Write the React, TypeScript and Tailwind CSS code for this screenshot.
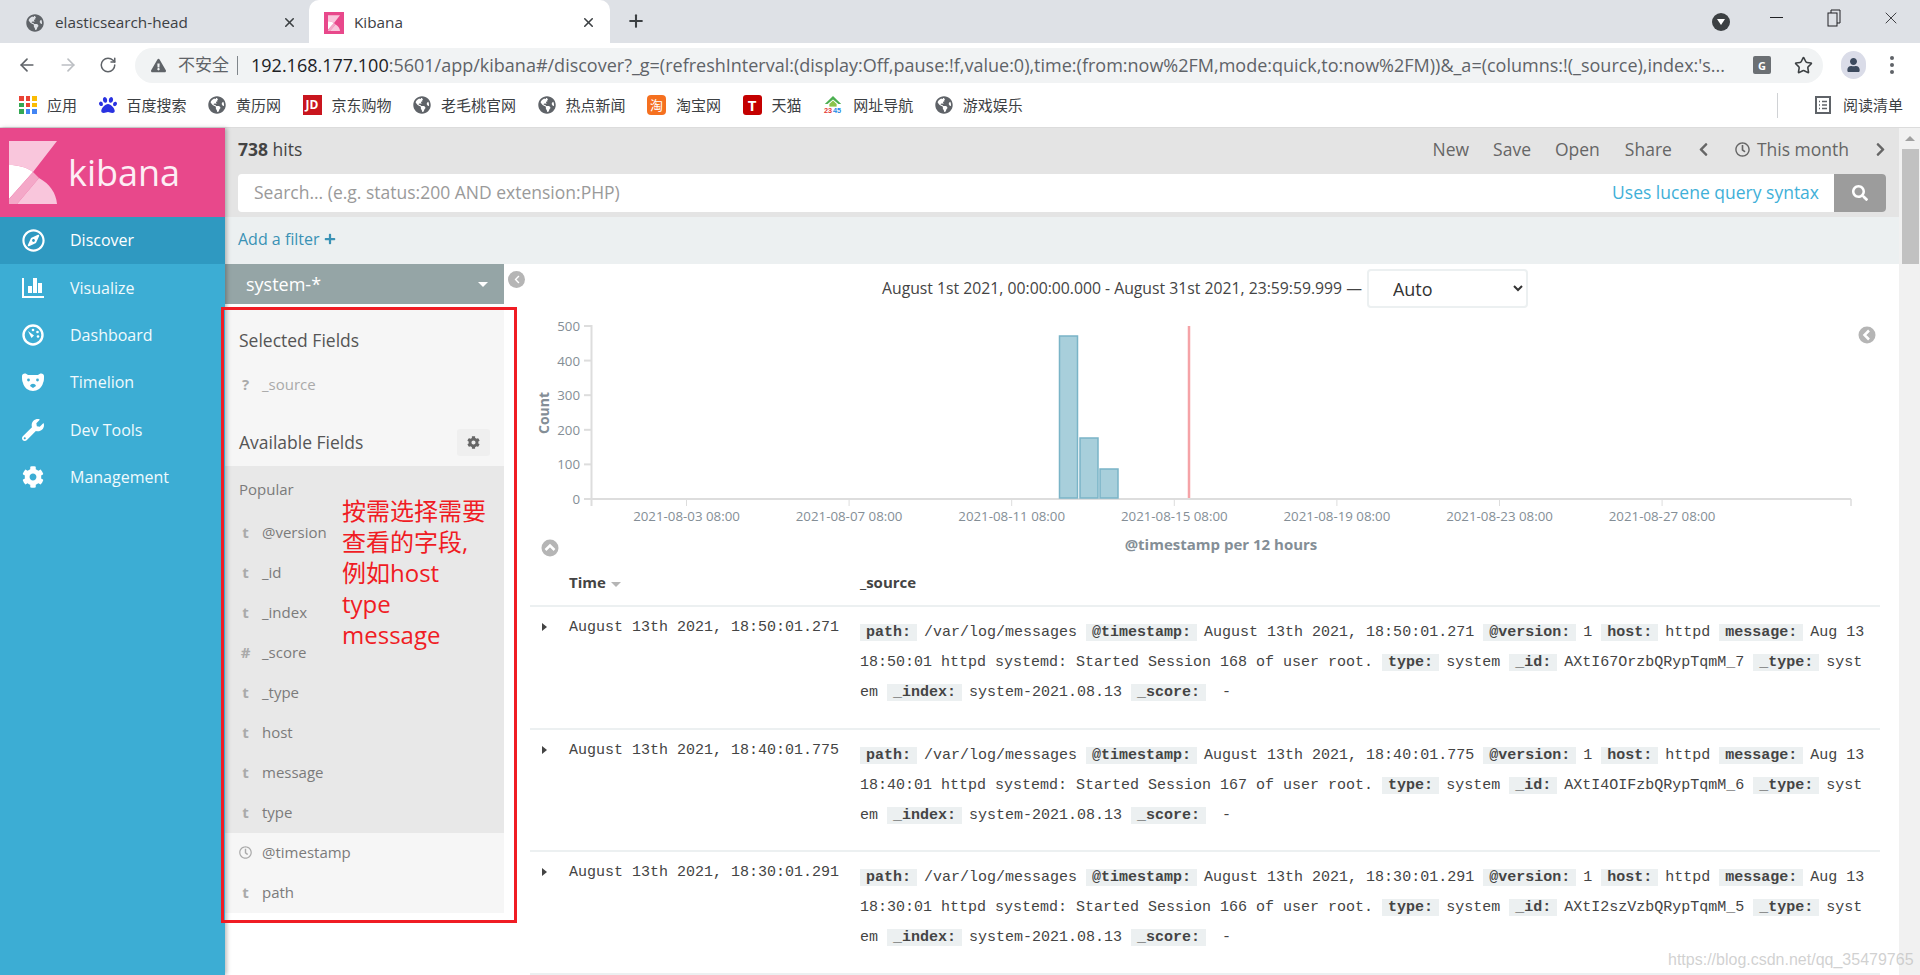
import { ArrowLeft, ArrowRight, RotateCw, Star, Plus, X } from "lucide-react";
import {
  FaGlobeAmericas,
  FaRegCompass,
  FaWrench,
  FaCog,
  FaSearch,
  FaChevronLeft,
  FaChevronRight,
  FaRegClock,
  FaUser,
  FaPlus,
  FaPaw,
  FaExclamationTriangle,
} from "react-icons/fa";

const sans = "font-['Open_Sans','Noto_Sans_CJK_SC',sans-serif]";

function Globe() {
  return <FaGlobeAmericas className="w-[18px] h-[18px] text-[#5f6368] shrink-0" />;
}

function KibanaMark({ className }: { className: string }) {
  return (
    <svg viewBox="0 0 48 63" className={className}>
      <path d="M0 0H48L24 31C17 26 9 24 0 24Z" fill="#f9c6dc" />
      <path d="M0 24C9 24 17 26 24 31L0 58Z" fill="#fff" />
      <path d="M24 31L30 37L8 63H0V58Z" fill="#f4a8c8" />
      <path d="M30 37C41 43 47 52 48 63H8Z" fill="#f9c6dc" />
    </svg>
  );
}

function Tabs() {
  return (
    <div className="h-[43px] bg-[#dee1e6] flex items-end shrink-0">
      <div className="w-[309px] h-[43px] flex items-center pl-[26px] pr-[12px] pt-[2px]">
        <Globe />
        <span className="ml-[11px] text-[15.3px] text-[#3c4043] flex-1">elasticsearch-head</span>
        <X strokeWidth={2.5} className="w-[15px] h-[15px] text-[#3c4043]" />
      </div>
      <div className="w-[301px] h-[43px] bg-white rounded-t-[10px] flex items-center pl-[15px] pr-[14px] pt-[2px]">
        <div className="w-[20px] h-[22px] bg-[#e8488b] flex items-center justify-center">
          <KibanaMark className="w-[12px] h-[16px]" />
        </div>
        <span className="ml-[10px] text-[15.3px] text-[#3c4043] flex-1">Kibana</span>
        <X strokeWidth={2.5} className="w-[15px] h-[15px] text-[#3c4043]" />
      </div>
      <Plus strokeWidth={2.5} className="w-[20px] h-[20px] ml-[16px] mb-[12px] text-[#3c4043]" />
      <div className="flex-1" />
      <div className="h-[43px] flex items-center">
        <div className="w-[18px] h-[18px] rounded-full bg-[#3c4043] flex items-center justify-center mt-[1px]">
          <div className="w-0 h-0 border-l-[4px] border-r-[4px] border-t-[6px] border-l-transparent border-r-transparent border-t-white" />
        </div>
        <div className="w-[13px] h-[1px] bg-[#202124] ml-[40px] mb-[8px]" />
        <svg viewBox="0 0 14 18" className="w-[14px] h-[18px] ml-[44px] mb-[8px] fill-none stroke-[#202124]">
          <rect x="1" y="4" width="9" height="13" />
          <path d="M4 4V1H13V14H10" />
        </svg>
        <X strokeWidth={1} className="w-[20px] h-[20px] ml-[40px] mr-[19px] mb-[8px] text-[#202124]" />
      </div>
    </div>
  );
}

function Toolbar() {
  return (
    <div className="h-[40px] bg-white flex items-center shrink-0 text-[#5f6368] pt-[4px]">
      <ArrowLeft className="w-[20px] h-[20px] ml-[17px]" />
      <ArrowRight className="w-[20px] h-[20px] ml-[21px] text-[#bcbfc3]" />
      <RotateCw className="w-[18px] h-[18px] ml-[21px]" />
      <div className="ml-[18px] w-[1688px] h-[35px] rounded-full bg-[#f1f3f4] flex items-center pl-[16px]">
        <FaExclamationTriangle className="w-[15px] h-[15px] text-[#5f6368] shrink-0" />
        <span className="ml-[12px] text-[17px] text-[#5f6368] shrink-0">不安全</span>
        <div className="w-[1px] h-[19px] bg-[#80868b] ml-[8px] shrink-0" />
        <div className="ml-[13px] text-[18px] whitespace-nowrap text-[#5f6368] w-[1486px] shrink-0 overflow-hidden">
          <span className="text-[#202124]">192.168.177.100</span>
          :5601/app/kibana#/discover?_g=(refreshInterval:(display:Off,pause:!f,value:0),time:(from:now%2FM,mode:quick,to:now%2FM))&_a=(columns:!(_source),index:'s...
        </div>
        <div className="w-[18px] h-[18px] ml-[16px] rounded-[2px] bg-[#6b6f73] flex items-center justify-center text-[11px] font-bold text-white leading-none shrink-0">
          G
        </div>
        <Star className="w-[19px] h-[19px] ml-[23px] text-[#3c4043] shrink-0" />
      </div>
      <div className="ml-[18px] w-[25px] h-[28px] rounded-full bg-[#dadce8] flex items-center justify-center">
        <FaUser className="w-[13px] h-[14px] text-[#3c4a5e]" />
      </div>
      <div className="ml-[24px] flex flex-col gap-[3px]">
        <div className="w-[4px] h-[4px] rounded-full bg-[#5f6368]" />
        <div className="w-[4px] h-[4px] rounded-full bg-[#5f6368]" />
        <div className="w-[4px] h-[4px] rounded-full bg-[#5f6368]" />
      </div>
    </div>
  );
}

function AppsIcon() {
  const colors = ["#ea4335", "#ea4335", "#fbbc04", "#34a853", "#ea4335", "#fbbc04", "#34a853", "#4285f4", "#4285f4"];
  return (
    <div className="w-[18px] h-[18px] grid grid-cols-3 gap-[2px]">
      {colors.map((c, i) => (
        <div key={i} style={{ backgroundColor: c }} />
      ))}
    </div>
  );
}

function House2345() {
  return (
    <svg viewBox="0 0 20 22" className="w-[20px] h-[20px] shrink-0">
      <path d="M10 1L19 10H16L10 5L4 10H1Z" fill="#4caf50" />
      <path d="M6 10L10 6L14 10V13H6Z" fill="#8bc34a" />
      <rect y="13" width="20" height="8" fill="#fff" />
      <text x="0" y="20" fontSize="8" fontWeight="700" fill="#e53935" fontFamily="Liberation Sans">23</text>
      <text x="10" y="20" fontSize="8" fontWeight="700" fill="#1e88e5" fontFamily="Liberation Sans">45</text>
    </svg>
  );
}

function Bookmark({ icon, label }: { icon: React.ReactNode; label: string }) {
  return (
    <div className="flex items-center gap-[10px] text-[15px] text-[#3c4043]">
      {icon}
      <span>{label}</span>
    </div>
  );
}

function Bookmarks() {
  return (
    <div className="h-[45px] bg-white flex items-center shrink-0 pl-[19px] pr-[17px] gap-[21.5px] border-b border-[#dcdcdc]">
      <Bookmark icon={<AppsIcon />} label="应用" />
      <Bookmark icon={<FaPaw className="w-[18px] h-[18px] text-[#2932e1]" />} label="百度搜索" />
      <Bookmark icon={<Globe />} label="黄历网" />
      <Bookmark
        icon={
          <div className="w-[19px] h-[20px] bg-[#c9151e] flex items-center justify-center text-[12px] font-bold text-white">
            JD
          </div>
        }
        label="京东购物"
      />
      <Bookmark icon={<Globe />} label="老毛桃官网" />
      <Bookmark icon={<Globe />} label="热点新闻" />
      <Bookmark
        icon={
          <div className="w-[19px] h-[20px] rounded-[4px] bg-[#f5701f] flex items-center justify-center text-[13px] leading-none text-white">
            淘
          </div>
        }
        label="淘宝网"
      />
      <Bookmark
        icon={
          <div className="w-[19px] h-[20px] rounded-[3px] bg-[#c40000] flex items-center justify-center text-[15px] font-bold text-white">
            T
          </div>
        }
        label="天猫"
      />
      <Bookmark icon={<House2345 />} label="网址导航" />
      <Bookmark icon={<Globe />} label="游戏娱乐" />
      <div className="flex-1" />
      <div className="w-[1px] h-[25px] bg-[#d0d2d5]" />
      <div className="flex items-center gap-[11px] text-[15px] text-[#3c4043] ml-[14px]">
        <svg viewBox="0 0 18 18" className="w-[18px] h-[18px] fill-none stroke-[#5f6368] stroke-2">
          <rect x="2" y="1" width="14" height="16" />
          <path d="M5 5.5h1M8 5.5h5M5 9h1M8 9h5M5 12.5h1M8 12.5h5" strokeWidth="1.4" />
        </svg>
        <span>阅读清单</span>
      </div>
    </div>
  );
}

function VisualizeIcon() {
  return (
    <svg viewBox="0 0 22 20" className="w-[22px] h-[20px] fill-white">
      <path d="M0 0H2V18H22V20H0Z" />
      <rect x="6" y="8" width="4" height="7" />
      <rect x="11" y="0" width="4" height="15" />
      <rect x="16" y="5" width="4" height="10" />
    </svg>
  );
}

function DashboardIcon() {
  return (
    <svg viewBox="0 0 22 22" className="w-[22px] h-[22px]">
      <circle cx="11" cy="11" r="9.5" fill="none" stroke="#fff" strokeWidth="2.4" />
      <path d="M6 7L12 11.5L9.5 14Z" fill="#fff" />
      <circle cx="11" cy="6" r="1.3" fill="#fff" />
      <circle cx="15.5" cy="8" r="1.3" fill="#fff" />
      <circle cx="16" cy="12.5" r="1.3" fill="#fff" />
    </svg>
  );
}

function BearIcon() {
  return (
    <svg viewBox="0 0 22 19" className="w-[22px] h-[19px]">
      <path d="M0 3C0 0 4 -0.5 6 2H16C18 -0.5 22 0 22 3C22 6 22 8 21 10C20 15 15 18 11 18C7 18 2 15 1 10C0 8 0 6 0 3Z" fill="#fff" />
      <circle cx="6.5" cy="7" r="1.4" fill="#3cadd4" />
      <circle cx="15.5" cy="7" r="1.4" fill="#3cadd4" />
      <path d="M8 13C9 10 13 10 14 13L11 15Z" fill="#3cadd4" />
    </svg>
  );
}

const navItems: { label: string; icon: React.ReactNode }[] = [
  { label: "Discover", icon: <FaRegCompass className="w-[23px] h-[23px] text-white" /> },
  { label: "Visualize", icon: <VisualizeIcon /> },
  { label: "Dashboard", icon: <DashboardIcon /> },
  { label: "Timelion", icon: <BearIcon /> },
  { label: "Dev Tools", icon: <FaWrench className="w-[22px] h-[22px] text-white" /> },
  { label: "Management", icon: <FaCog className="w-[22px] h-[22px] text-white" /> },
];

function Sidebar() {
  return (
    <div className="w-[225px] shrink-0 bg-[#3cadd4] flex flex-col shadow-[2px_0_4px_rgba(0,0,0,0.25)] z-10">
      <div className="h-[89px] bg-[#e8488b] flex items-center pl-[9px]">
        <KibanaMark className="w-[48px] h-[63px]" />
        <span className="ml-[11px] text-[36px] font-medium text-[#fdeef5] leading-none">kibana</span>
      </div>
      {navItems.map((item, i) => (
        <div
          key={item.label}
          className={
            i === 0
              ? "h-[47.4px] pb-[1px] flex items-center bg-[#2f99c1] text-white"
              : "h-[47.4px] pb-[1px] flex items-center text-[#f0fafd]"
          }
        >
          <div className="w-[70px] flex justify-center pr-[4px]">{item.icon}</div>
          <span className="text-[16px]">{item.label}</span>
        </div>
      ))}
    </div>
  );
}

function TopBar() {
  return (
    <div className="shrink-0">
      <div className="bg-[#e4e4e4] h-[89px] pl-[13px] pr-[13px] flex flex-col">
        <div className="h-[46px] pb-[4px] flex items-center text-[17.5px] text-[#666]">
          <span className="text-[#444]">
            <b>738</b> hits
          </span>
          <div className="flex-1" />
          <span>New</span>
          <span className="ml-[24px]">Save</span>
          <span className="ml-[24px]">Open</span>
          <span className="ml-[25px]">Share</span>
          <FaChevronLeft className="ml-[26px] w-[11px] h-[15px]" />
          <FaRegClock className="ml-[26px] w-[15px] h-[15px]" />
          <span className="ml-[7px]">This month</span>
          <FaChevronRight className="ml-[26px] w-[11px] h-[15px]" />
        </div>
        <div className="h-[38px] flex rounded-[4px] overflow-hidden bg-white">
          <div className="flex-1 pl-[16px] pr-[15px] pb-[2px] flex items-center justify-between text-[17.5px]">
            <span className="text-[#9a9a9a]">Search... (e.g. status:200 AND extension:PHP)</span>
            <span className="text-[#3fb0d8]">Uses lucene query syntax</span>
          </div>
          <div className="w-[52px] bg-[#9c9c9c] flex items-center justify-center">
            <FaSearch className="w-[16px] h-[16px] text-white" />
          </div>
        </div>
      </div>
      <div className="h-[47px] pb-[3px] bg-[#ecf0f1] flex items-center pl-[13px] text-[16px] text-[#3a92b5] gap-[4px]">
        Add a filter
        <FaPlus className="w-[12px] h-[12px]" />
      </div>
    </div>
  );
}

const popular = [
  { t: "t", name: "@version" },
  { t: "t", name: "_id" },
  { t: "t", name: "_index" },
  { t: "#", name: "_score" },
  { t: "t", name: "_type" },
  { t: "t", name: "host" },
  { t: "t", name: "message" },
  { t: "t", name: "type" },
];

function FieldRow({ t, name }: { t: React.ReactNode; name: string }) {
  return (
    <div className="h-[40px] pb-[2px] flex items-center text-[15px] text-[#7b7b7b]">
      <div className="w-[37px] pl-[4px] flex justify-center font-bold text-[#aaa]">{t}</div>
      <span>{name}</span>
    </div>
  );
}

function FieldsPane() {
  return (
    <div className="w-[279px] shrink-0 flex flex-col">
      <div className="h-[40px] bg-[#95a5a6] flex items-center pl-[21px] pr-[16px] text-[18px] text-white shrink-0">
        <span className="flex-1">system-*</span>
        <div className="w-0 h-0 border-l-[5px] border-r-[5px] border-t-[5px] border-l-transparent border-r-transparent border-t-white" />
      </div>
      <div className="mt-[4px] bg-[#f6f6f6] h-[605px] flex flex-col">
        <div className="h-[50px] flex items-end pl-[14px] text-[17.5px] text-[#555] pb-[5px]">Selected Fields</div>
        <div className="h-[44px] pb-[2px] flex items-center text-[15px] text-[#aaa] mt-[5px]">
          <div className="w-[37px] pl-[4px] flex justify-center font-bold">?</div>
          <span>_source</span>
        </div>
        <div className="h-[58px] flex items-center pl-[14px] pr-[14px] text-[17.5px] text-[#555] pt-[12px]">
          <span className="flex-1">Available Fields</span>
          <div className="w-[33px] h-[27px] bg-[#efefef] rounded-[3px] flex items-center justify-center">
            <FaCog className="w-[13px] h-[13px] text-[#666]" />
          </div>
        </div>
        <div className="bg-[#e8e8e8] pt-[7px] mt-[1px]">
          <div className="h-[32px] flex items-center pl-[14px] text-[15px] text-[#7b7b7b]">Popular</div>
          <div className="pt-[8px]">
            {popular.map((f) => (
              <FieldRow key={f.name} t={f.t} name={f.name} />
            ))}
          </div>
        </div>
        <FieldRow t={<FaRegClock className="w-[13px] h-[13px]" />} name="@timestamp" />
        <FieldRow t="t" name="path" />
      </div>
    </div>
  );
}

const yTicks = [
  { v: "500", y: 18 },
  { v: "400", y: 52.6 },
  { v: "300", y: 87.2 },
  { v: "200", y: 121.8 },
  { v: "100", y: 156.4 },
  { v: "0", y: 191 },
];
const xTicks = ["2021-08-03 08:00", "2021-08-07 08:00", "2021-08-11 08:00", "2021-08-15 08:00", "2021-08-19 08:00", "2021-08-23 08:00", "2021-08-27 08:00"];
const bars = [
  { x: 529.5, w: 18, y: 28 },
  { x: 550, w: 18, y: 130 },
  { x: 570, w: 18, y: 161 },
];

function Chart() {
  return (
    <svg width="1350" height="252" className="block font-['Open_Sans',sans-serif]">
      {yTicks.map((t) => (
        <g key={t.v}>
          <line x1="54" x2="61" y1={t.y} y2={t.y} stroke="#ddd" strokeWidth="2" />
          <text x="50" y={t.y + 5} textAnchor="end" fontSize="13.3" fill="#848e96">
            {t.v}
          </text>
        </g>
      ))}
      <line x1="61.5" x2="61.5" y1="17" y2="198" stroke="#ddd" strokeWidth="2" />
      <line x1="61" x2="1321" y1="191" y2="191" stroke="#ddd" strokeWidth="2" />
      <line x1="1321" x2="1321" y1="191" y2="198" stroke="#ddd" strokeWidth="1.5" />
      {xTicks.map((t, i) => (
        <g key={t}>
          <line x1={156.5 + i * 162.6} x2={156.5 + i * 162.6} y1="191" y2="198" stroke="#ddd" />
          <text x={156.5 + i * 162.6} y="213" textAnchor="middle" fontSize="13.3" fill="#848e96">
            {t}
          </text>
        </g>
      ))}
      {bars.map((b) => (
        <rect key={b.x} x={b.x} y={b.y} width={b.w} height={190 - b.y} fill="#a8cfdb" stroke="#7ab4c7" strokeWidth="1.5" />
      ))}
      <line x1="659" x2="659" y1="18" y2="190" stroke="#f5a3a7" strokeWidth="2.5" />
      <text transform="translate(19 105) rotate(-90)" textAnchor="middle" fontSize="14" fontWeight="700" fill="#848e96">
        Count
      </text>
      <text x="691" y="242" textAnchor="middle" fontSize="15" fontWeight="700" fill="#848e96">
        @timestamp per 12 hours
      </text>
      <circle cx="20" cy="240" r="8.5" fill="#b5b5b5" />
      <path d="M15.5 242L20 237.5L24.5 242" fill="none" stroke="#fff" strokeWidth="2.5" />
      <circle cx="1337" cy="27" r="8.5" fill="#b5b5b5" />
      <path d="M1339 22.5L1334.5 27L1339 31.5" fill="none" stroke="#fff" strokeWidth="2.5" />
    </svg>
  );
}

const rows = [
  { stamp: "18:50:01", ms: "271", session: "168", id: "AXtI67OrzbQRypTqmM_7" },
  { stamp: "18:40:01", ms: "775", session: "167", id: "AXtI4OIFzbQRypTqmM_6" },
  { stamp: "18:30:01", ms: "291", session: "166", id: "AXtI2szVzbQRypTqmM_5" },
];

function Chip({ children }: { children: string }) {
  return <span className="bg-[#ecf0f1] font-bold px-[6px] mr-[-2px]">{children}</span>;
}

function Row({ stamp, ms, session, id }: (typeof rows)[number]) {
  const time = `August 13th 2021, ${stamp}.${ms}`;
  return (
    <div className="h-[122.6px] border-b-2 border-[#ecf0f1] flex font-['Liberation_Mono',monospace] text-[15px] text-[#444]">
      <div className="w-[39px] shrink-0 pl-[12px] pt-[16px]">
        <div className="w-0 h-0 border-t-[4px] border-b-[4px] border-l-[5px] border-t-transparent border-b-transparent border-l-[#444]" />
      </div>
      <div className="w-[291px] shrink-0 pt-[11px] leading-[20px] whitespace-nowrap">{time}</div>
      <div className="flex-1 pt-[11px] pr-[12px] leading-[30px] break-all">
        <Chip>path:</Chip> /var/log/messages <Chip>@timestamp:</Chip> {time} <Chip>@version:</Chip> 1{" "}
        <Chip>host:</Chip> httpd <Chip>message:</Chip> Aug 13 {stamp} httpd systemd: Started Session {session} of user
        root. <Chip>type:</Chip> system <Chip>_id:</Chip> {id} <Chip>_type:</Chip> system <Chip>_index:</Chip>{" "}
        system-2021.08.13 <Chip>_score:</Chip> &nbsp;-
      </div>
    </div>
  );
}

function Results() {
  return (
    <div className="flex-1 min-w-0 pl-[26px] pr-[19px] overflow-hidden">
      <div className="h-[44px] pt-[5px] flex items-center justify-center gap-[5px] text-[15.75px] text-[#444]">
        <span>August 1st 2021, 00:00:00.000 - August 31st 2021, 23:59:59.999 —</span>
        <select className="w-[161px] h-[39px] border-2 border-[#ecf0f1] rounded-[4px] bg-white pl-[20px] text-[18px] text-[#333]">
          <option>Auto</option>
        </select>
      </div>
      <Chart />
      <div className="h-[47px] border-b-2 border-[#ecf0f1] flex items-center text-[15px] font-bold text-[#444]">
        <div className="w-[330px] pl-[39px] flex items-center gap-[5px]">
          Time
          <div className="w-0 h-0 border-l-[5px] border-r-[5px] border-t-[5px] border-l-transparent border-r-transparent border-t-[#b5b5b5] mt-[3px]" />
        </div>
        <div>_source</div>
      </div>
      {rows.map((r) => (
        <Row key={r.id} {...r} />
      ))}
    </div>
  );
}

function Scrollbar() {
  return (
    <div className="w-[21px] shrink-0 bg-[#f1f1f1] flex flex-col items-center pl-[1px]">
      <div className="mt-[8px] w-0 h-0 border-l-[5px] border-r-[5px] border-b-[5px] border-l-transparent border-r-transparent border-b-[#a0a0a0]" />
      <div className="mt-[8px] w-[17px] h-[115px] bg-[#c1c1c1]" />
    </div>
  );
}

export default function App() {
  return (
    <div className={`${sans} relative w-[1920px] h-[975px] overflow-hidden flex flex-col bg-white`}>
      <Tabs />
      <Toolbar />
      <Bookmarks />
      <div className="flex-1 flex min-h-0">
        <Sidebar />
        <div className="flex-1 min-w-0 flex flex-col">
          <TopBar />
          <div className="flex-1 flex min-h-0">
            <FieldsPane />
            <Results />
          </div>
        </div>
        <Scrollbar />
      </div>

      {/* collapse toggle next to the index pattern */}
      <div className="absolute left-[508px] top-[271px] w-[17px] h-[17px] rounded-full bg-[#b5b5b5] flex items-center justify-center">
        <FaChevronLeft className="w-[8px] h-[9px] text-white" />
      </div>

      {/* red annotation drawn over the screenshot */}
      <div className="absolute left-[221px] top-[307px] w-[296px] h-[616px] border-[3px] border-[#f01c24] z-20" />
      <div className="absolute left-[342px] top-[495px] z-20 text-[24px] leading-[31px] text-[#f01c24]">
        <div>按需选择需要</div>
        <div>查看的字段,</div>
        <div>例如host</div>
        <div>type</div>
        <div>message</div>
      </div>

      <div className="absolute left-[1668px] top-[948px] font-['Liberation_Sans',sans-serif] text-[16px] text-[#bdbdbd]/70 z-20">
        https://blog.csdn.net/qq_35479765
      </div>
    </div>
  );
}
